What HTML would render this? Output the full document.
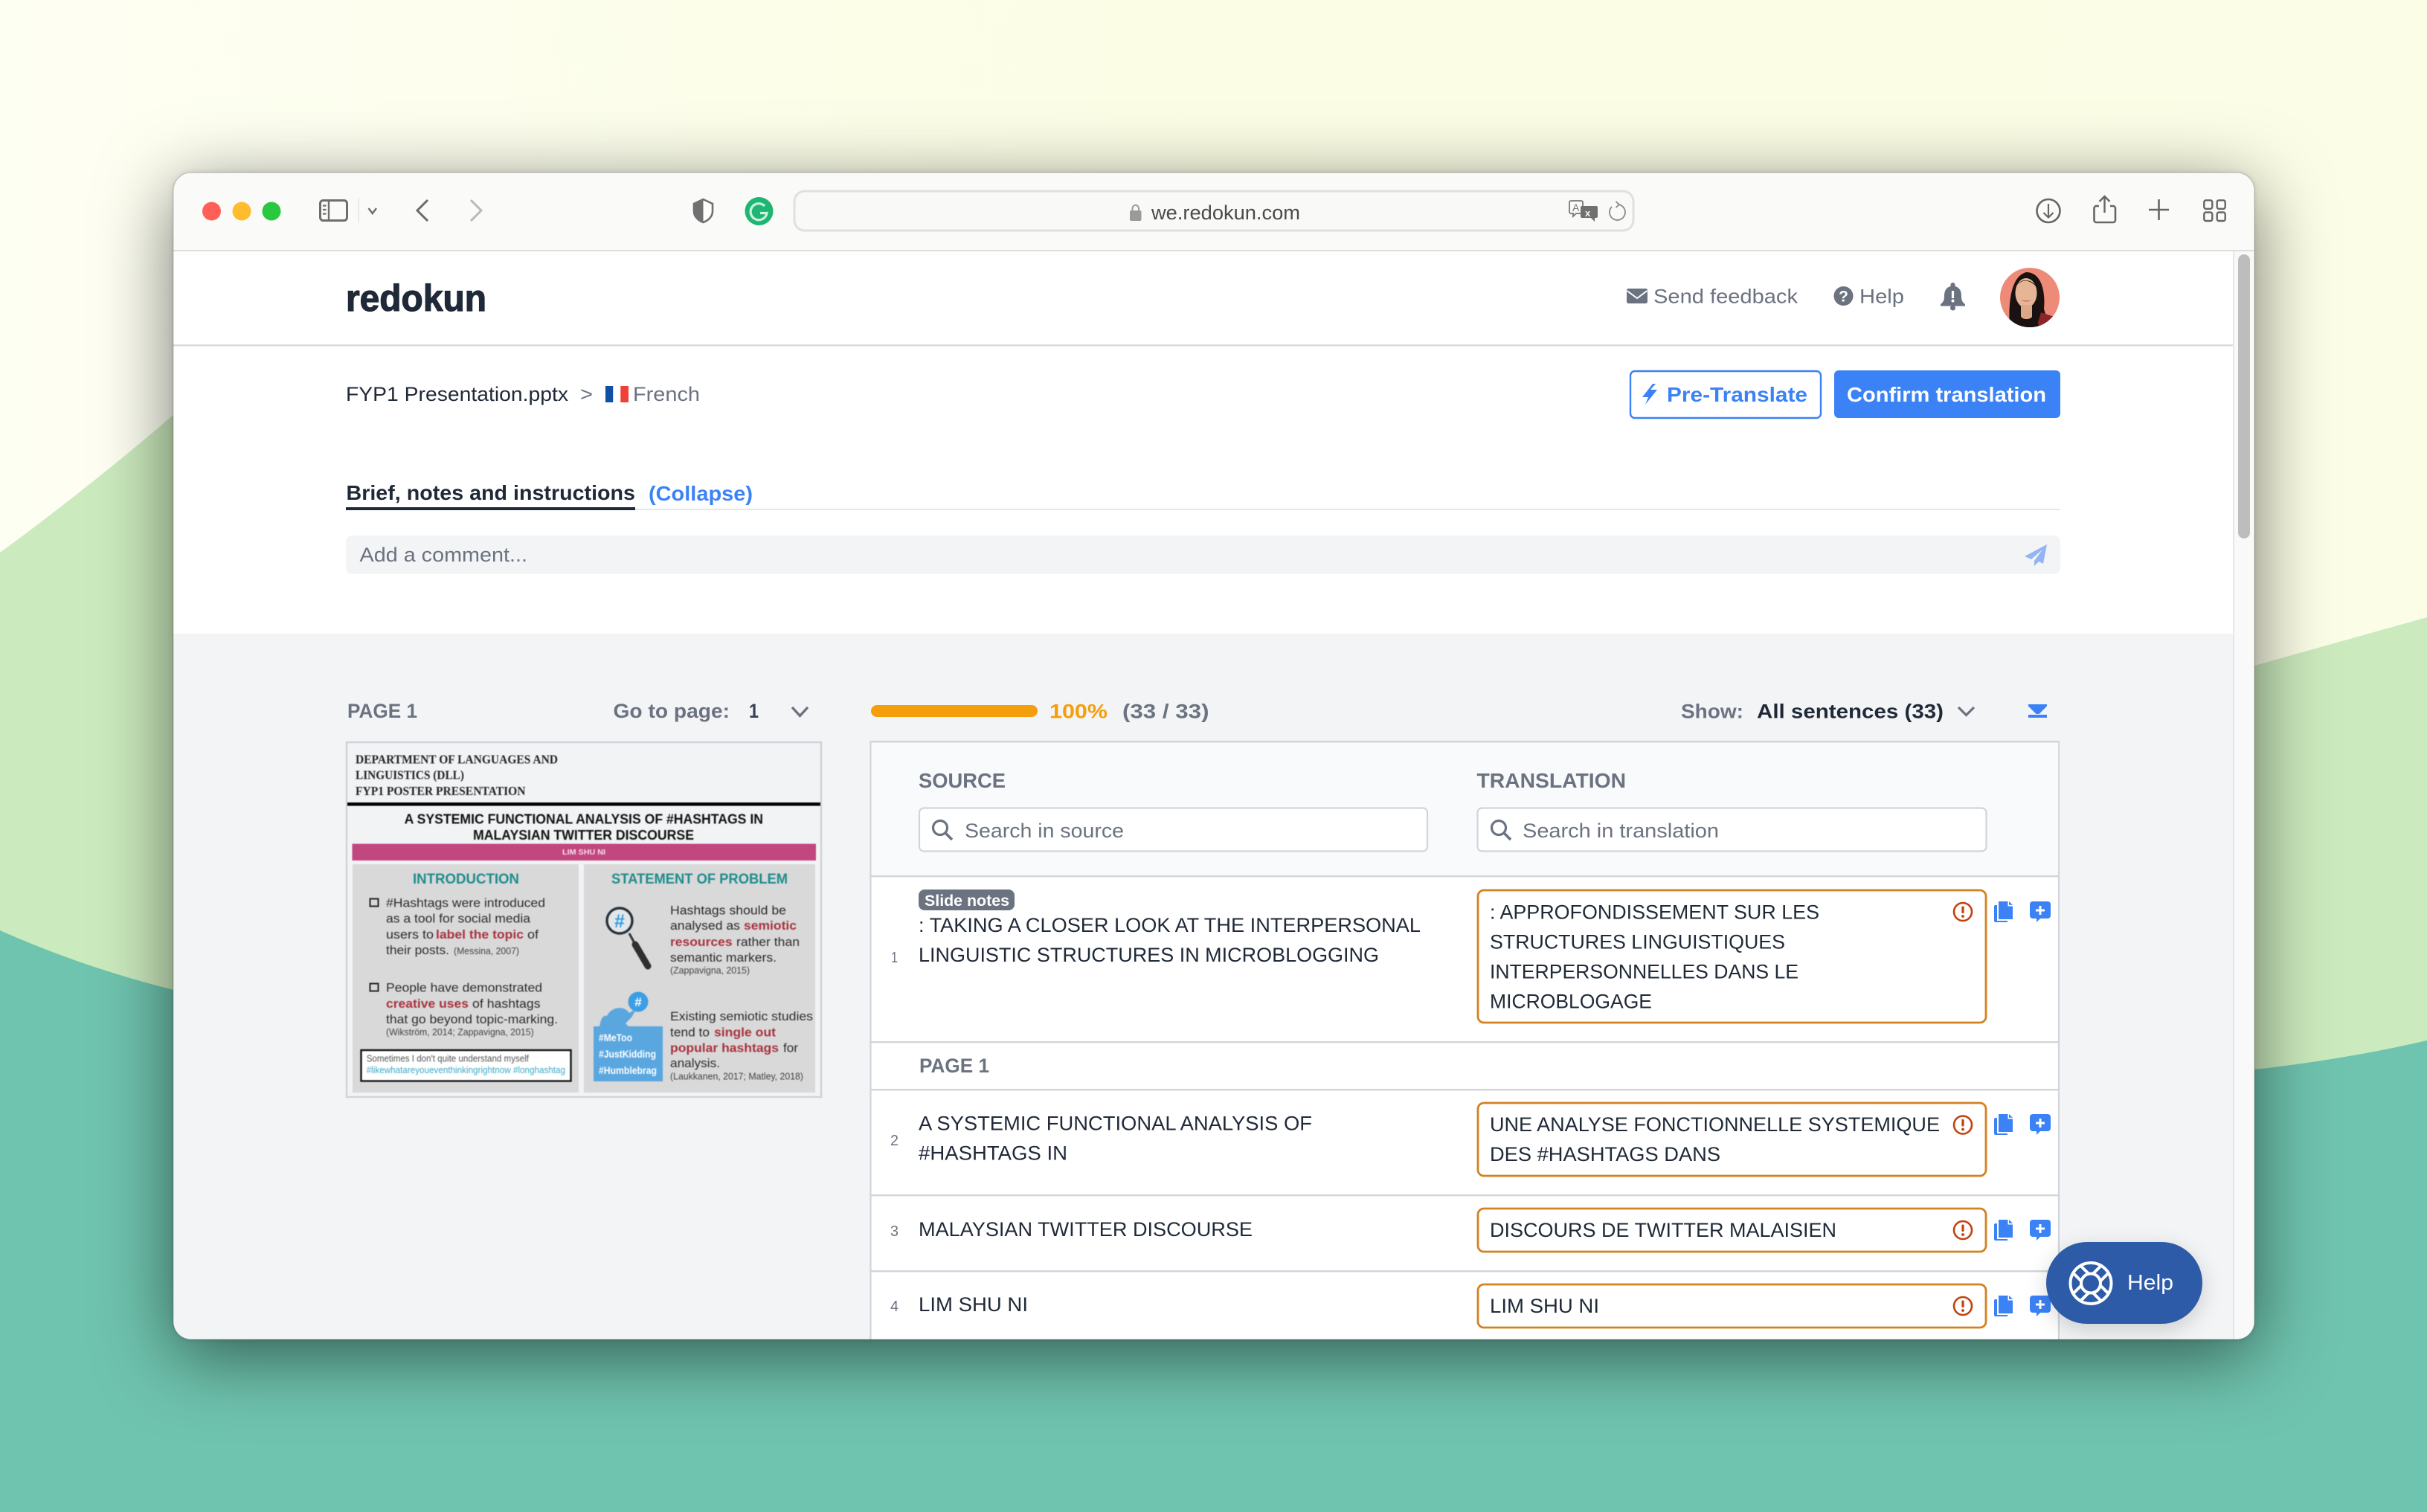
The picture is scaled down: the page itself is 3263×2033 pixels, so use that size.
<!DOCTYPE html>
<html lang="en">
<head>
<meta charset="utf-8">
<title>Redokun</title>
<style>
html,body{margin:0;padding:0;width:3263px;height:2033px;overflow:hidden;background:#fcffec}
svg{position:absolute;left:0;top:0;display:block}
#win{position:absolute;left:233px;top:232px;width:2798px;height:1569px;border-radius:24px;background:#fff;box-shadow:0 22px 100px rgba(0,0,0,.54),0 0 8px rgba(0,0,0,.12)}
text{font-family:"Liberation Sans",sans-serif;white-space:pre}
.b{font-weight:700}
.d{fill:#1f2937}
.g{fill:#6b7280}
.s{font-size:27px}
.u{fill:#fff}
.bl{fill:#3b82f6}
.th{font-size:17px;fill:#2b2b2b}
.sm{font-size:13px;fill:#444}
.r{font-size:17px;fill:#a8323e;font-weight:700}
.tag{font-size:13.5px;fill:#fff;font-weight:700}
.ser{font-family:"Liberation Serif",serif;font-weight:700;font-size:16.5px;fill:#222}
.hd{font-size:19px;font-weight:700;fill:#1f8c8c}
.ti{font-size:18.5px;font-weight:700;fill:#111}
</style>
</head>
<body>
<svg width="3263" height="2033" viewBox="0 0 3263 2033">
  <defs>
    <linearGradient id="bg" x1="0" y1="0" x2="1" y2="0">
      <stop offset="0" stop-color="#fefff3"/><stop offset=".5" stop-color="#fbfde4"/><stop offset="1" stop-color="#fbfde6"/>
    </linearGradient>
  </defs>
  <rect width="3263" height="2033" fill="url(#bg)"/>
  <path d="M0 743 Q120 655 233 558 L1600 300 L3031 895 L3263 830 V2033 H0Z" fill="#cbeabd"/>
  <path d="M0 1251 Q110 1300 233 1331 L1600 1500 L3031 1438 Q3150 1425 3263 1399 V2033 H0Z" fill="#6fc4af"/>
</svg>
<div id="win"></div>
<svg width="3263" height="2033" viewBox="0 0 3263 2033">
  <defs>
    <clipPath id="wc"><rect x="233" y="232" width="2798" height="1569" rx="24"/></clipPath>
    <clipPath id="av"><circle cx="2729" cy="400" r="40"/></clipPath>
    <g id="warn">
      <circle cx="0" cy="0" r="12" fill="none" stroke="#c2410c" stroke-width="2.6"/>
      <rect x="-1.6" y="-7.5" width="3.2" height="9.5" rx="1.2" fill="#c2410c"/>
      <circle cx="0" cy="6" r="1.9" fill="#c2410c"/>
    </g>
    <g id="copy">
      <path d="M2687 1212H2699.5V1218.5H2706V1236H2687Z" fill="#3b82f6"/>
      <path d="M2701 1212L2706 1216.8H2701Z" fill="#3b82f6"/>
      <path d="M2685 1217V1238H2699V1240H2683A2 2 0 0 1 2681 1238V1219A2 2 0 0 1 2683 1217Z" fill="#3b82f6"/>
      <path d="M2733 1212H2753A4 4 0 0 1 2757 1216V1231A4 4 0 0 1 2753 1235H2743L2738 1240V1235H2733A4 4 0 0 1 2729 1231V1216A4 4 0 0 1 2733 1212Z" fill="#3b82f6"/>
      <path d="M2743 1218V1230M2737 1224H2749" stroke="#fff" stroke-width="3" fill="none"/>
    </g>
    <path id="bandline" d="M-7 -11V-26M7 -11V-26" stroke="#fff" stroke-width="4" fill="none"/>
  </defs>

  <g clip-path="url(#wc)">
    <!-- toolbar -->
    <rect x="233" y="232" width="2798" height="105" fill="#fafbf8"/>
    <rect x="233" y="336" width="2798" height="2" fill="#dcdedc"/>
    <circle cx="284.500" cy="284" r="12.500" fill="#ff5f57"/>
    <circle cx="325" cy="284" r="12.500" fill="#febc2e"/>
    <circle cx="365" cy="284" r="12.500" fill="#28c840"/>
    <rect x="430.500" y="269.500" width="36" height="27" rx="4" fill="none" stroke="#6e6e6e" stroke-width="3"/>
    <path d="M442 270V296" stroke="#6e6e6e" stroke-width="2.400"/>
    <path d="M434 276.500H438.500M434 282H438.500M434 287.500H438.500" stroke="#6e6e6e" stroke-width="2.200"/>
    <path d="M482 266V300" stroke="#e4e5e2" stroke-width="1.500"/>
    <path d="M495.500 280L500.800 287L506 280" fill="none" stroke="#6e6e6e" stroke-width="2.400"/>
    <path d="M575 269L561 283L575 297" fill="none" stroke="#6a6a6a" stroke-width="3"/>
    <path d="M633 269L647 283L633 297" fill="none" stroke="#b9b9b9" stroke-width="3"/>
    <path d="M945.500 268L958 274V284C958 291.500 952 296.500 945.500 299C939 296.500 933 291.500 933 284V274Z" fill="#fff" stroke="#707070" stroke-width="2.600"/>
    <path d="M945.500 268L933 274V284C933 291.500 939 296.500 945.500 299Z" fill="#707070"/>
    <circle cx="1020.500" cy="284" r="19" fill="#1fb574"/>
    <path d="M1028 277A11 11 0 1 0 1031 286.500H1022" fill="none" stroke="#c9f2dd" stroke-width="3.200"/>
    <rect x="1068" y="257" width="1128" height="53" rx="14" fill="#f9faf7" stroke="#dfe1dd" stroke-width="3"/>
    <rect x="1519" y="283" width="15.500" height="14" rx="2" fill="#9a9a9a"/>
    <path d="M1522.500 283V280A4.300 5 0 0 1 1531 280V283" fill="none" stroke="#9a9a9a" stroke-width="2"/>
    <text x="1548" y="295" class="s" fill="#4a4a4a" textLength="200" lengthAdjust="spacingAndGlyphs">we.redokun.com</text>
    <path d="M2112 270H2126A2 2 0 0 1 2128 272V285A2 2 0 0 1 2126 287H2119L2115 291V287H2112A2 2 0 0 1 2110 285V272A2 2 0 0 1 2112 270Z" fill="#fafbf8" stroke="#777" stroke-width="1.800"/>
    <text x="2114" y="284" font-size="14" fill="#777">A</text>
    <path d="M2127 277H2146A2 2 0 0 1 2148 279V291A2 2 0 0 1 2146 293H2144V298L2139 293H2127A2 2 0 0 1 2125 291V279A2 2 0 0 1 2127 277Z" fill="#707070"/>
    <text x="2131" y="291" font-size="13" fill="#fafbf8" font-weight="700">x</text>
    <path d="M2167 278A10.500 10.500 0 1 0 2176 275" fill="none" stroke="#888" stroke-width="1.800"/>
    <path d="M2172.500 271L2177 275L2172.500 279" fill="none" stroke="#888" stroke-width="1.800"/>
    <circle cx="2754" cy="283.500" r="15.500" fill="none" stroke="#666" stroke-width="2.600"/>
    <path d="M2754 274V292M2747.500 286L2754 292.500L2760.500 286" fill="none" stroke="#666" stroke-width="2.200"/>
    <path d="M2822 277H2818A3 3 0 0 0 2815.500 280V296A3 3 0 0 0 2818 299H2841A3 3 0 0 0 2844 296V280A3 3 0 0 0 2841 277H2837" fill="none" stroke="#666" stroke-width="2.600"/>
    <path d="M2829.500 264V286M2822.500 271L2829.500 264L2836.500 271" fill="none" stroke="#666" stroke-width="2.400"/>
    <path d="M2902.500 268V296M2889 282H2916" stroke="#666" stroke-width="2.600"/>
    <g fill="none" stroke="#666" stroke-width="2.400">
      <rect x="2963.300" y="269.300" width="11" height="11.500" rx="2.500"/>
      <rect x="2980.700" y="269.300" width="11" height="11.500" rx="2.500"/>
      <rect x="2963.300" y="285.500" width="11" height="11.500" rx="2.500"/>
      <rect x="2980.700" y="285.500" width="11" height="11.500" rx="2.500"/>
    </g>

    <!-- page base -->
    <rect x="233" y="338" width="2769" height="515" fill="#fff"/>
    <rect x="233" y="852" width="2769" height="950" fill="#f3f4f6"/>
    <rect x="3002" y="338" width="29" height="1465" fill="#f9f9f9"/>
    <rect x="3002" y="338" width="2" height="1465" fill="#e7e7e7"/>
    <rect x="3009" y="342" width="16" height="382" rx="8" fill="#bdbdbd"/>

    <!-- header -->
    <text x="465" y="418" font-size="50" class="b d" stroke="#1f2937" stroke-width="1.200" textLength="189" lengthAdjust="spacingAndGlyphs">redokun</text>
    <rect x="233" y="463.300" width="2769" height="2" fill="#d1d5db"/>
    <rect x="2187" y="388" width="28" height="20" rx="2.500" fill="#6b7280"/>
    <path d="M2187.500 391L2201 401L2214.500 391" fill="none" stroke="#fff" stroke-width="2"/>
    <text x="2223" y="407.500" class="s g" textLength="194" lengthAdjust="spacingAndGlyphs">Send feedback</text>
    <circle cx="2478.500" cy="398" r="13" fill="#6b7280"/>
    <text x="2478.500" y="405.500" font-size="21" class="b u" text-anchor="middle">?</text>
    <text x="2500" y="407.500" class="s g" textLength="60" lengthAdjust="spacingAndGlyphs">Help</text>
    <path d="M2625.500 380A3 3 0 0 1 2628.500 383V385C2636 387 2637 393 2637 399C2637 404 2639 407 2642 409V411.500H2609V409C2612 407 2614 404 2614 399C2614 393 2615 387 2622.500 385V383A3 3 0 0 1 2625.500 380Z" fill="#6b7280"/>
    <circle cx="2625.500" cy="414" r="3.500" fill="#6b7280"/>
    <rect x="2623.900" y="391" width="3.200" height="10" fill="#fff"/>
    <circle cx="2625.500" cy="404.500" r="2" fill="#fff"/>
    <g clip-path="url(#av)">
      <rect x="2689" y="360" width="80" height="80" fill="#ee8a78"/>
      <path d="M2702 440C2700 412 2702 372 2724 366C2746 366 2750 395 2748 415C2750 425 2756 432 2756 440Z" fill="#1a1210"/>
      <ellipse cx="2724" cy="394" rx="14.500" ry="20" fill="#e6b596"/>
      <path d="M2710 386C2714 378 2726 372 2738 386C2734 376 2716 372 2710 386Z" fill="#1a1210"/>
      <path d="M2717 410H2732V426C2729 430 2720 430 2717 426Z" fill="#dba888"/>
      <path d="M2717 403Q2724 408 2731 403Q2724 406 2717 403Z" fill="#b5525a"/>
      <path d="M2738 440L2744 420L2768 428V440Z" fill="#8c2526"/>
      <path d="M2704 440C2706 428 2712 418 2716 424C2722 434 2730 434 2736 424L2742 440Z" fill="#1a1210"/>
    </g>

    <!-- breadcrumb -->
    <text x="465" y="539" class="s d" textLength="299" lengthAdjust="spacingAndGlyphs">FYP1 Presentation.pptx</text>
    <text x="780" y="539" class="s g" textLength="17" lengthAdjust="spacingAndGlyphs">&gt;</text>
    <rect x="814" y="519" width="10.300" height="22" fill="#0f4fa8"/>
    <rect x="824.300" y="519" width="10" height="22" fill="#fff"/>
    <rect x="834.300" y="519" width="10.700" height="22" fill="#ef4135"/>
    <text x="851" y="539" class="s g" textLength="90" lengthAdjust="spacingAndGlyphs">French</text>
    <rect x="2192" y="499" width="256" height="63" rx="6" fill="#fff" stroke="#3b82f6" stroke-width="2.400"/>
    <path d="M2222 516L2208 534H2216L2212 544L2228 524H2219L2226 516Z" fill="#3b82f6"/>
    <text x="2241" y="540" font-size="28" class="b bl" textLength="189" lengthAdjust="spacingAndGlyphs">Pre-Translate</text>
    <rect x="2466" y="498" width="304" height="64" rx="6" fill="#3b82f6"/>
    <text x="2483" y="540" font-size="28" class="b u" textLength="268" lengthAdjust="spacingAndGlyphs">Confirm translation</text>

    <!-- brief -->
    <text x="465.500" y="672" font-size="28" class="b d" textLength="388.500" lengthAdjust="spacingAndGlyphs">Brief, notes and instructions</text>
    <text x="872" y="673" font-size="28" class="b bl" textLength="140" lengthAdjust="spacingAndGlyphs">(Collapse)</text>
    <rect x="465" y="684" width="2305" height="2" fill="#e5e7eb"/>
    <rect x="465" y="682" width="389" height="4" fill="#1f2937"/>
    <rect x="465" y="720" width="2305" height="52" rx="8" fill="#f3f4f6"/>
    <text x="483.500" y="755" class="s g" textLength="225.500" lengthAdjust="spacingAndGlyphs">Add a comment...</text>
    <path d="M2752 732L2722 748L2731 752L2746 739L2735 754V761L2741 755L2747 758Z" fill="#93b5f4"/>

    <!-- left controls -->
    <text x="467" y="965" font-size="27" class="b g" textLength="94" lengthAdjust="spacingAndGlyphs">PAGE 1</text>
    <text x="824.500" y="965" font-size="27" class="b g" textLength="156.500" lengthAdjust="spacingAndGlyphs">Go to page:</text>
    <text x="1007" y="965" font-size="27" class="b" fill="#374151" textLength="13" lengthAdjust="spacingAndGlyphs">1</text>
    <path d="M1065 951L1075.500 962.500L1086 951" fill="none" stroke="#6b7280" stroke-width="3.400"/>

    <!-- thumbnail -->
    <rect x="466" y="998" width="638" height="477" fill="#f2f3f5" stroke="#d1d5db" stroke-width="2.600"/>
    <g style="filter:blur(.55px)">
      <text x="478" y="1026.500" class="ser" textLength="272" lengthAdjust="spacingAndGlyphs">DEPARTMENT OF LANGUAGES AND</text>
      <text x="478" y="1047.600" class="ser" textLength="146" lengthAdjust="spacingAndGlyphs">LINGUISTICS (DLL)</text>
      <text x="478" y="1069" class="ser" textLength="228.500" lengthAdjust="spacingAndGlyphs">FYP1 POSTER PRESENTATION</text>
      <rect x="467" y="1079" width="636" height="4.500" fill="#000"/>
      <text x="543.600" y="1107.600" class="ti" textLength="482.400" lengthAdjust="spacingAndGlyphs">A SYSTEMIC FUNCTIONAL ANALYSIS OF #HASHTAGS IN</text>
      <text x="636" y="1129" class="ti" textLength="297" lengthAdjust="spacingAndGlyphs">MALAYSIAN TWITTER DISCOURSE</text>
      <rect x="473.500" y="1134.600" width="623.500" height="22.400" fill="#c2477f"/>
      <text x="756" y="1149" font-size="10.500" class="b" fill="#f5e3ec" textLength="58" lengthAdjust="spacingAndGlyphs">LIM SHU NI</text>
      <rect x="474" y="1162" width="304" height="307" fill="#d9d9d9"/>
      <rect x="785" y="1162" width="311" height="307" fill="#d9d9d9"/>
      <text x="555" y="1188" class="hd" textLength="143" lengthAdjust="spacingAndGlyphs">INTRODUCTION</text>
      <text x="822" y="1188" class="hd" textLength="237" lengthAdjust="spacingAndGlyphs">STATEMENT OF PROBLEM</text>

      <rect x="497.500" y="1208.500" width="11" height="10" fill="none" stroke="#222" stroke-width="2"/>
      <text x="519" y="1219.700" class="th" textLength="214" lengthAdjust="spacingAndGlyphs">#Hashtags were introduced</text>
      <text x="519" y="1240.700" class="th" textLength="194" lengthAdjust="spacingAndGlyphs">as a tool for social media</text>
      <text x="519" y="1262" class="th" textLength="64" lengthAdjust="spacingAndGlyphs">users to</text>
      <text x="586" y="1262" class="r" textLength="118" lengthAdjust="spacingAndGlyphs">label the topic</text>
      <text x="709" y="1262" class="th" textLength="15" lengthAdjust="spacingAndGlyphs">of</text>
      <text x="519" y="1283" class="th" textLength="85" lengthAdjust="spacingAndGlyphs">their posts.</text>
      <text x="610" y="1283" class="sm" textLength="88" lengthAdjust="spacingAndGlyphs">(Messina, 2007)</text>

      <rect x="497.500" y="1322.500" width="11" height="10" fill="none" stroke="#222" stroke-width="2"/>
      <text x="519" y="1333.600" class="th" textLength="210" lengthAdjust="spacingAndGlyphs">People have demonstrated</text>
      <text x="519" y="1355" class="r" textLength="111" lengthAdjust="spacingAndGlyphs">creative uses</text>
      <text x="635" y="1355" class="th" textLength="91.600" lengthAdjust="spacingAndGlyphs">of hashtags</text>
      <text x="519" y="1376" class="th" textLength="231" lengthAdjust="spacingAndGlyphs">that go beyond topic-marking.</text>
      <text x="519" y="1392" class="sm" textLength="198.700" lengthAdjust="spacingAndGlyphs">(Wikström, 2014; Zappavigna, 2015)</text>

      <rect x="485.500" y="1412" width="282" height="41.500" fill="#fff" stroke="#111" stroke-width="2.400"/>
      <text x="492.700" y="1427.600" font-size="12.500" fill="#555" textLength="218.300" lengthAdjust="spacingAndGlyphs">Sometimes I don't quite understand myself</text>
      <text x="492.700" y="1443" font-size="12.500" fill="#3aa9c7" textLength="267.300" lengthAdjust="spacingAndGlyphs">#likewhatareyoueventhinkingrightnow #longhashtag</text>

      <circle cx="833" cy="1238" r="17" fill="#e4e7e9" stroke="#26323a" stroke-width="3.400"/>
      <text x="833" y="1247" font-size="25" class="b" fill="#2d9fe2" text-anchor="middle">#</text>
      <path d="M846 1255L853 1268" stroke="#333" stroke-width="3"/>
      <path d="M854 1270L871 1299" stroke="#2f2f2f" stroke-width="9" stroke-linecap="round"/>

      <text x="901" y="1229.600" class="th" textLength="156" lengthAdjust="spacingAndGlyphs">Hashtags should be</text>
      <text x="901" y="1250" class="th" textLength="94" lengthAdjust="spacingAndGlyphs">analysed as</text>
      <text x="1000" y="1250" class="r" textLength="71" lengthAdjust="spacingAndGlyphs">semiotic</text>
      <text x="901" y="1272" class="r" textLength="83.600" lengthAdjust="spacingAndGlyphs">resources</text>
      <text x="990" y="1272" class="th" textLength="85" lengthAdjust="spacingAndGlyphs">rather than</text>
      <text x="901" y="1293" class="th" textLength="143" lengthAdjust="spacingAndGlyphs">semantic markers.</text>
      <text x="901" y="1309" class="sm" textLength="107" lengthAdjust="spacingAndGlyphs">(Zappavigna, 2015)</text>

      <text x="901" y="1372" class="th" textLength="192" lengthAdjust="spacingAndGlyphs">Existing semiotic studies</text>
      <text x="901" y="1393.600" class="th" textLength="53" lengthAdjust="spacingAndGlyphs">tend to</text>
      <text x="960" y="1393.600" class="r" textLength="83" lengthAdjust="spacingAndGlyphs">single out</text>
      <text x="901" y="1414.600" class="r" textLength="146" lengthAdjust="spacingAndGlyphs">popular hashtags</text>
      <text x="1053" y="1414.600" class="th" textLength="20" lengthAdjust="spacingAndGlyphs">for</text>
      <text x="901" y="1435" class="th" textLength="67" lengthAdjust="spacingAndGlyphs">analysis.</text>
      <text x="901" y="1451.600" class="sm" textLength="179" lengthAdjust="spacingAndGlyphs">(Laukkanen, 2017; Matley, 2018)</text>

      <rect x="798" y="1380" width="93" height="74" fill="#5aa7e0"/>
      <path d="M806 1381C808 1367 812 1365 816 1366C822 1353 840 1352 846 1362L856 1356L849 1368L841 1376L846 1381Z" fill="#5aa7e0"/>
      <circle cx="858" cy="1347" r="13.500" fill="#3d9fe3"/>
      <text x="858" y="1353" font-size="17" class="b u" text-anchor="middle">#</text>
      <text x="805" y="1400" class="tag" textLength="45" lengthAdjust="spacingAndGlyphs">#MeToo</text>
      <text x="805" y="1422" class="tag" textLength="77" lengthAdjust="spacingAndGlyphs">#JustKidding</text>
      <text x="805" y="1444" class="tag" textLength="78" lengthAdjust="spacingAndGlyphs">#Humblebrag</text>
    </g>

    <!-- progress -->
    <rect x="1171" y="948" width="224" height="16" rx="8" fill="#f59e0b"/>
    <text x="1411" y="965.500" font-size="27" class="b" fill="#f59e0b" textLength="78" lengthAdjust="spacingAndGlyphs">100%</text>
    <text x="1509" y="965.500" font-size="27" class="b g" textLength="116.500" lengthAdjust="spacingAndGlyphs">(33 / 33)</text>
    <text x="2260" y="965.500" font-size="27" class="b g" textLength="84" lengthAdjust="spacingAndGlyphs">Show:</text>
    <text x="2362" y="965.500" font-size="27" class="b d" textLength="251" lengthAdjust="spacingAndGlyphs">All sentences (33)</text>
    <path d="M2633 951L2643.500 961.500L2654 951" fill="none" stroke="#6b7280" stroke-width="3.200"/>
    <path d="M2727 947H2752V949.500L2741.500 960H2737.500L2727 949.500Z" fill="#3b82f6"/>
    <rect x="2727" y="961" width="25" height="4" fill="#3b82f6"/>

    <!-- table -->
    <rect x="1170.500" y="997" width="1597.500" height="840" fill="#fff" stroke="#d1d5db" stroke-width="2.200"/>
    <rect x="1171.600" y="998" width="1595.500" height="180" fill="#f9fafb"/>
    <rect x="1171" y="996" width="1597.500" height="2.500" fill="#d1d5db"/>
    <g fill="#d1d5db">
      <rect x="1171" y="1177" width="1597" height="2.400"/>
      <rect x="1171" y="1400" width="1597" height="2.400"/>
      <rect x="1171" y="1464" width="1597" height="2.400"/>
      <rect x="1171" y="1606" width="1597" height="2.400"/>
      <rect x="1171" y="1708" width="1597" height="2.400"/>
    </g>
    <text x="1235" y="1059" font-size="28" class="b g" textLength="117" lengthAdjust="spacingAndGlyphs">SOURCE</text>
    <text x="1985.500" y="1059" font-size="28" class="b g" textLength="200.500" lengthAdjust="spacingAndGlyphs">TRANSLATION</text>

    <rect x="1236" y="1086.500" width="683" height="58" rx="6" fill="#fff" stroke="#d1d5db" stroke-width="2.200"/>
    <circle cx="1264" cy="1113" r="9.500" fill="none" stroke="#6b7280" stroke-width="3.200"/>
    <path d="M1271 1120L1280 1129" stroke="#6b7280" stroke-width="3.600"/>
    <text x="1297" y="1126" class="s g" textLength="214" lengthAdjust="spacingAndGlyphs">Search in source</text>

    <rect x="1986.500" y="1086.500" width="684" height="58" rx="6" fill="#fff" stroke="#d1d5db" stroke-width="2.200"/>
    <circle cx="2015" cy="1113" r="9.500" fill="none" stroke="#6b7280" stroke-width="3.200"/>
    <path d="M2022 1120L2031 1129" stroke="#6b7280" stroke-width="3.600"/>
    <text x="2047" y="1126" class="s g" textLength="264" lengthAdjust="spacingAndGlyphs">Search in translation</text>

    <!-- row 1 -->
    <rect x="1235" y="1196" width="129" height="28" rx="8" fill="#6b7280"/>
    <text x="1243" y="1218" font-size="21" class="b u" textLength="114" lengthAdjust="spacingAndGlyphs">Slide notes</text>
    <text x="1235" y="1253" class="s d" textLength="675" lengthAdjust="spacingAndGlyphs">: TAKING A CLOSER LOOK AT THE INTERPERSONAL</text>
    <text x="1235" y="1293" class="s d" textLength="619" lengthAdjust="spacingAndGlyphs">LINGUISTIC STRUCTURES IN MICROBLOGGING</text>
    <text x="1198" y="1294" font-size="20" class="g" textLength="9" lengthAdjust="spacingAndGlyphs">1</text>
    <rect x="1987" y="1197" width="683" height="178" rx="8" fill="#fff" stroke="#d4811f" stroke-width="2.800"/>
    <text x="2003" y="1235.700" class="s d" textLength="443" lengthAdjust="spacingAndGlyphs">: APPROFONDISSEMENT SUR LES</text>
    <text x="2003" y="1275.700" class="s d" textLength="397" lengthAdjust="spacingAndGlyphs">STRUCTURES LINGUISTIQUES</text>
    <text x="2003" y="1315.700" class="s d" textLength="415" lengthAdjust="spacingAndGlyphs">INTERPERSONNELLES DANS LE</text>
    <text x="2003" y="1355.700" class="s d" textLength="218" lengthAdjust="spacingAndGlyphs">MICROBLOGAGE</text>
    <use href="#warn" x="2639" y="1226"/>
    <use href="#copy"/>

    <!-- page 1 -->
    <text x="1236" y="1442" font-size="27" class="b g" textLength="94" lengthAdjust="spacingAndGlyphs">PAGE 1</text>

    <!-- row 2 -->
    <text x="1197" y="1540" font-size="20" class="g" textLength="11" lengthAdjust="spacingAndGlyphs">2</text>
    <text x="1235" y="1519.500" class="s d" textLength="529" lengthAdjust="spacingAndGlyphs">A SYSTEMIC FUNCTIONAL ANALYSIS OF</text>
    <text x="1235" y="1559.500" class="s d" textLength="200" lengthAdjust="spacingAndGlyphs">#HASHTAGS IN</text>
    <rect x="1987" y="1483" width="683" height="98" rx="8" fill="#fff" stroke="#d4811f" stroke-width="2.800"/>
    <text x="2003" y="1521" class="s d" textLength="605" lengthAdjust="spacingAndGlyphs">UNE ANALYSE FONCTIONNELLE SYSTEMIQUE</text>
    <text x="2003" y="1561" class="s d" textLength="310" lengthAdjust="spacingAndGlyphs">DES #HASHTAGS DANS</text>
    <use href="#warn" x="2639" y="1512.500"/>
    <use href="#copy" y="286"/>

    <!-- row 3 -->
    <text x="1197" y="1662" font-size="20" class="g" textLength="11" lengthAdjust="spacingAndGlyphs">3</text>
    <text x="1235" y="1662" class="s d" textLength="449" lengthAdjust="spacingAndGlyphs">MALAYSIAN TWITTER DISCOURSE</text>
    <rect x="1987" y="1625" width="683" height="58" rx="8" fill="#fff" stroke="#d4811f" stroke-width="2.800"/>
    <text x="2003" y="1663" class="s d" textLength="466" lengthAdjust="spacingAndGlyphs">DISCOURS DE TWITTER MALAISIEN</text>
    <use href="#warn" x="2639" y="1654"/>
    <use href="#copy" y="428"/>

    <!-- row 4 -->
    <text x="1197" y="1763" font-size="20" class="g" textLength="11" lengthAdjust="spacingAndGlyphs">4</text>
    <text x="1235" y="1763" class="s d" textLength="147" lengthAdjust="spacingAndGlyphs">LIM SHU NI</text>
    <rect x="1987" y="1727" width="683" height="58" rx="8" fill="#fff" stroke="#d4811f" stroke-width="2.800"/>
    <text x="2003" y="1765" class="s d" textLength="147" lengthAdjust="spacingAndGlyphs">LIM SHU NI</text>
    <use href="#warn" x="2639" y="1756"/>
    <use href="#copy" y="530"/>

    <!-- fab -->
    <g style="filter:drop-shadow(0 8px 14px rgba(0,0,0,.16))">
      <rect x="2751" y="1670" width="210" height="110" rx="55" fill="#2d5ba8"/>
    </g>
    <g transform="translate(2811 1725.500)">
      <circle r="27.500" fill="none" stroke="#fff" stroke-width="4"/>
      <circle r="13" fill="none" stroke="#fff" stroke-width="4"/>
      <use href="#bandline" transform="rotate(45)"/>
      <use href="#bandline" transform="rotate(135)"/>
      <use href="#bandline" transform="rotate(225)"/>
      <use href="#bandline" transform="rotate(315)"/>
    </g>
    <text x="2860" y="1734" font-size="29" fill="#fff" textLength="62" lengthAdjust="spacingAndGlyphs">Help</text>
  </g>
  <rect x="233" y="232" width="2798" height="1569" rx="24" fill="none" stroke="rgba(0,0,0,.18)" stroke-width="1.200"/>
</svg>
</body>
</html>
